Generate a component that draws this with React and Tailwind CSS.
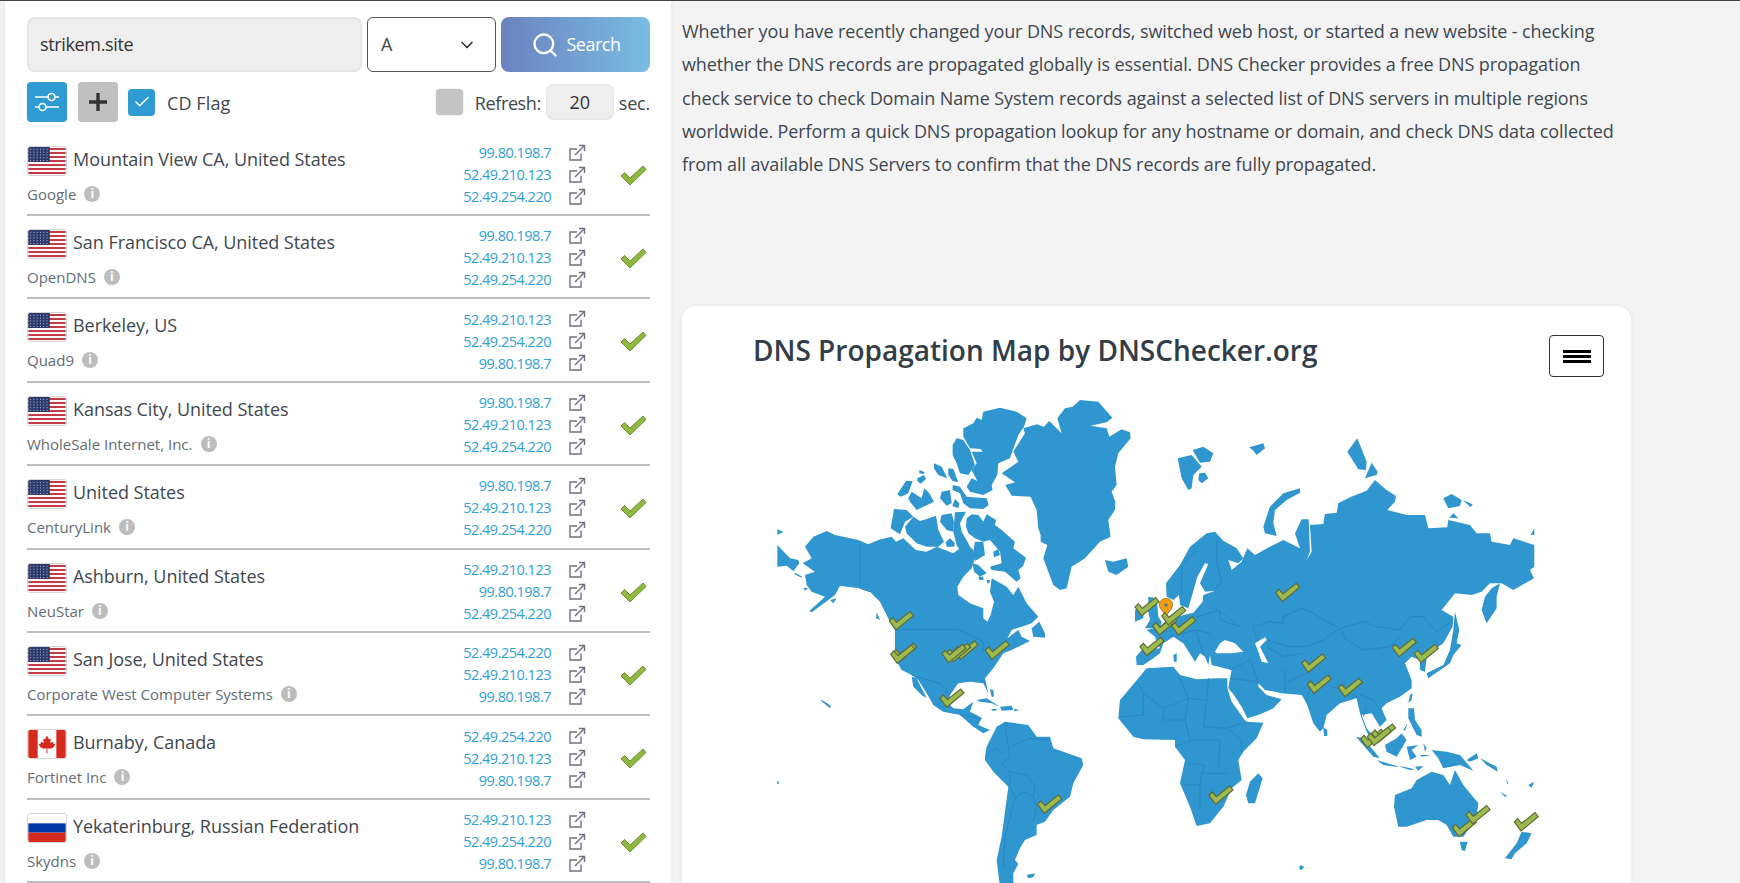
import React from "react";
import { Search, ChevronDown, Check } from "lucide-react";

const A = "99.80.198.7";
const B = "52.49.210.123";
const C = "52.49.254.220";

const servers = [
  { flag: "us", name: "Mountain View CA, United States", org: "Google", ips: [A, B, C] },
  { flag: "us", name: "San Francisco CA, United States", org: "OpenDNS", ips: [A, B, C] },
  { flag: "us", name: "Berkeley, US", org: "Quad9", ips: [B, C, A] },
  { flag: "us", name: "Kansas City, United States", org: "WholeSale Internet, Inc.", ips: [A, B, C] },
  { flag: "us", name: "United States", org: "CenturyLink", ips: [A, B, C] },
  { flag: "us", name: "Ashburn, United States", org: "NeuStar", ips: [B, A, C] },
  { flag: "us", name: "San Jose, United States", org: "Corporate West Computer Systems", ips: [C, B, A] },
  { flag: "ca", name: "Burnaby, Canada", org: "Fortinet Inc", ips: [C, B, A] },
  { flag: "ru", name: "Yekaterinburg, Russian Federation", org: "Skydns", ips: [B, C, A] },
];

const intro = [
  "Whether you have recently changed your DNS records, switched web host, or started a new website - checking",
  "whether the DNS records are propagated globally is essential. DNS Checker provides a free DNS propagation",
  "check service to check Domain Name System records against a selected list of DNS servers in multiple regions",
  "worldwide. Perform a quick DNS propagation lookup for any hostname or domain, and check DNS data collected",
  "from all available DNS Servers to confirm that the DNS records are fully propagated.",
];

// map shapes are in crop pixels (3x), each group below scales them back to the page
const northWest = [
  "M862,70 885,40 908,35 930,15 985,20 1027,68 1010,82 962,92 1010,100 1018,125 1055,103 1080,112 1082,130 1045,175 1035,215 1040,270 1025,290 1036,320 1035,345 1015,375 1022,425 990,440 945,490 905,515 890,580 870,585 850,570 820,490 832,450 812,440 812,420 805,400 800,345 782,305 725,302 706,270 735,262 695,235 745,200 730,170 765,115 760,100 800,88 822,95 838,78 875,115Z",
  "M580,100 610,85 620,68 635,75 640,50 690,38 740,50 770,70 762,95 745,120 720,190 685,205 682,240 665,270 668,285 640,300 600,290 590,275 605,250 622,258 605,225 620,205 605,170 638,170 632,162 600,160 580,125Z",
  "M548,150 560,130 580,135 600,165 615,210 595,240 570,235 560,205 548,180Z",
  "M492,205 515,215 532,250 505,240 492,220Z",
  "M535,220 550,222 565,262 548,258 535,240Z",
  "M448,225 465,232 460,237 448,235Z",
  "M442,250 462,240 468,252 452,266 442,258Z",
  "M408,258 428,258 415,295 392,305 382,298Z",
  "M425,290 455,310 463,280 478,295 492,320 440,345 420,320 415,310Z",
  "M515,290 540,285 545,325 530,332 510,310Z",
  "M548,270 570,275 590,305 650,310 656,330 640,342 600,340 580,325 570,295 548,285Z",
  "M555,312 568,325 565,340 547,333Z",
  "M372,342 410,345 430,365 405,380 390,418 362,400Z",
  "M405,395 430,365 450,378 470,372 498,362 505,405 522,440 505,455 470,455 440,445 420,425 410,415Z",
  "M515,360 545,355 552,380 550,410 530,405 510,380Z",
  "M555,352 588,350 570,385 575,410 595,445 605,470 578,480 560,450 550,410Z",
  "M540,430 555,445 552,455 530,455 527,442Z",
  "M590,370 605,358 625,360 640,380 650,358 678,375 675,390 695,405 735,440 730,460 768,488 760,512 745,525 752,550 740,560 705,530 665,525 660,515 695,505 690,470 660,435 640,440 615,430 595,415 588,395Z",
  "M608,505 625,510 650,535 630,545 612,530Z",
  "M625,545 640,545 640,555 628,555Z",
  "M650,555 660,555 658,565 652,565Z",
  "M615,440 640,440 645,480 615,498 610,470Z",
  "M670,470 685,462 690,480 672,487Z",
  "M105,455 130,425 170,408 195,420 265,435 295,448 325,435 345,430 365,425 378,440 400,430 437,465 470,470 500,455 550,475 590,445 610,465 615,490 605,520 580,545 562,575 565,600 600,625 640,640 640,670 652,680 662,660 672,620 660,590 665,550 710,575 730,600 745,575 770,625 805,665 785,685 755,695 725,705 712,730 745,705 755,725 780,738 745,755 725,765 700,775 670,820 645,850 655,895 640,865 600,860 565,865 540,900 535,925 550,940 580,943 610,920 600,950 620,960 635,970 625,990 660,1005 640,1015 610,995 570,960 520,950 490,930 470,895 445,855 425,840 395,825 375,790 375,705 360,680 330,620 300,590 270,580 230,575 210,572 195,600 175,615 125,652 118,648 165,605 125,590 110,570 105,540 135,530 98,505 125,490Z",
  "M425,845 440,850 470,910 455,900 430,875Z",
  "M785,700 808,680 825,715 825,728 790,725Z",
  "M22,450 60,490 85,495 88,505 70,528 50,512 22,515Z",
  "M22,403 40,410 22,420Z",
  "M75,533 97,545 92,547 73,538Z",
  "M100,578 115,580 105,587Z",
  "M180,615 200,610 190,625Z",
  "M320,652 330,675 318,670Z",
  "M1005,495 1030,500 1070,490 1075,515 1040,540 1015,530Z",
];

const southWest = [
  "M645,350 650,320 680,260 705,245 775,255 800,290 840,290 850,325 935,355 940,375 910,430 900,470 850,510 825,545 800,555 800,585 765,600 750,625 735,660 745,672 730,700 730,740 690,740 680,660 695,590 715,440 670,395 645,360Z",
  "M770,705 795,700 790,712 775,715Z",
  "M150,180 160,182 182,197 180,205 165,192Z",
  "M21,425 27,425 27,431 21,431Z",
  "M620,180 650,175 690,200 665,190 630,185Z",
  "M665,207 680,207 680,212 665,212Z",
  "M690,200 725,197 730,210 695,212Z",
  "M732,207 746,208 746,212 732,212Z",
  "M660,148 670,150 672,170 665,170Z",
];

const northWestBorders = [
  "M270,440 270,580 300,590",
  "M385,703 560,703 590,715 640,740 640,770",
];

const southWestBorders = [
  "M425,105 510,130 540,165",
  "M570,225 610,230 635,235",
  "M705,250 715,320 720,350 695,370 720,395 720,440 735,470",
  "M720,395 770,405 795,440 790,470 760,455 735,475",
  "M645,350 680,325 700,345",
  "M720,320 780,295 840,300",
  "M735,475 705,590 700,680",
  "M790,470 800,500 790,545",
];

const northEast = [
  "M78,710 95,690 150,685 135,650 110,630 150,620 170,600 190,595 200,590 250,578 278,545 280,525 315,512 285,515 270,490 295,432 285,430 262,470 245,530 235,565 210,555 207,525 190,540 170,530 168,490 210,435 240,380 290,340 315,335 340,362 380,385 400,415 385,430 355,420 365,450 395,425 412,385 435,405 480,380 520,360 570,385 555,340 575,298 596,298 600,395 590,420 605,395 600,315 640,312 645,282 680,278 685,250 720,232 770,212 795,180 830,210 858,228 855,245 832,270 890,285 945,285 955,325 1012,322 1015,300 1080,315 1100,340 1140,340 1145,365 1200,375 1210,355 1273,375 1273,440 1260,450 1272,475 1210,510 1175,490 1140,490 1115,515 1085,525 1035,520 995,570 1030,590 1028,620 1000,670 985,680 950,715 945,755 930,750 930,720 905,710 885,730 905,780 905,805 870,830 830,850 815,865 830,900 810,920 785,880 755,885 770,925 795,955 810,960 790,965 770,935 750,880 740,835 690,850 650,885 640,925 630,935 610,910 590,850 575,825 515,820 495,815 465,810 445,790 445,800 470,825 515,838 490,865 445,885 412,895 395,860 372,825 355,805 360,775 365,750 305,735 300,705 295,735 285,710 270,700 255,725 220,670 190,650 160,670 150,700 130,715 100,735 80,735Z",
  "M1170,490 1160,530 1160,565 1130,610 1115,570 1125,530 1145,505Z",
  "M190,705 200,700 200,725 192,725Z",
  "M115,530 140,535 145,590 155,605 150,625 105,625 120,600 115,575Z",
  "M75,570 100,565 100,595 75,605Z",
  "M203,115 245,105 275,140 250,165 245,205 235,210 215,175Z",
  "M248,90 280,80 310,100 300,125 270,128Z",
  "M268,160 285,158 295,175 275,190 265,180Z",
  "M418,82 460,70 465,85 440,105 428,90Z",
  "M570,205 570,218 530,240 495,270 490,310 500,348 465,340 460,320 480,260 520,220Z",
  "M742,55 770,125 768,150 745,148 712,95Z",
  "M785,128 803,155 800,165 765,175Z",
  "M1000,235 1025,222 1055,240 1050,258 1015,265Z",
  "M1058,240 1088,253 1082,262Z",
  "M1018,293 1030,280 1045,295Z",
  "M1262,345 1273,325 1273,345Z",
  "M1035,575 1048,630 1040,670 1055,675 1030,705 1020,730 955,775 950,760 1000,735 1020,690 1030,630Z",
];

const southEast = [
  "M30,180 60,145 85,115 110,85 190,80 210,105 260,118 320,115 352,115 352,145 365,185 408,245 460,248 440,295 400,335 385,360 395,420 365,445 340,500 300,550 260,558 240,500 210,430 225,360 195,320 195,300 100,298 70,290 25,235Z",
  "M900,165 908,160 905,180 895,188Z",
  "M895,205 912,205 915,240 935,270 935,290 920,285 895,235Z",
  "M880,270 893,250 885,272Z",
  "M640,262 652,270 652,288 642,288Z",
  "M738,290 760,295 810,355 790,350Z",
  "M800,360 860,378 868,382 820,375Z",
  "M870,378 915,388 900,390 875,382Z",
  "M915,380 940,378 925,392Z",
  "M825,315 860,295 875,280 890,300 860,350 830,335Z",
  "M890,320 925,315 905,330 920,350 900,360Z",
  "M940,310 950,325 945,335Z",
  "M930,345 965,345 935,350Z",
  "M965,330 1010,335 1050,345 1090,392 1050,375 1000,385 985,355Z",
  "M1070,360 1100,340 1105,355 1080,365Z",
  "M1110,355 1160,380 1163,395 1130,375Z",
  "M1188,418 1196,430 1192,432Z",
  "M1170,455 1192,468 1185,470Z",
  "M1255,435 1273,425 1265,443Z",
  "M855,465 905,445 920,420 965,395 1000,405 1020,435 1035,390 1060,435 1105,490 1100,530 1085,555 1060,590 1030,590 1010,555 985,540 950,540 890,560 865,560 852,500Z",
  "M1050,605 1073,605 1065,633 1055,630Z",
  "M1235,575 1265,580 1250,610 1215,640 1205,658 1185,655 1220,610Z",
  "M570,675 583,680 575,690 568,688Z",
  "M445,400 458,415 435,490 415,490 408,465 420,425Z",
];

const seas = [
  "M315,695 330,670 345,660 375,670 400,695 365,700 320,700Z",
  "M435,670 465,652 470,660 450,680 475,730 455,725 445,695Z",
];

const northEastBorders = [
  "M430,620 480,605 520,610 520,590 575,565 610,580 640,600 690,625 760,605 800,620 870,630 900,590 940,590 980,635 1030,600",
  "M690,625 710,660 760,690 840,680 870,650",
  "M430,620 440,660",
  "M470,660 540,680 590,680 640,660 690,625",
  "M270,375 215,440 215,530",
  "M320,360 320,430 335,480 315,510",
  "M310,560 390,620",
  "M260,590 330,570 330,600 390,620",
  "M180,650 260,630 300,640",
  "M260,640 280,700",
  "M200,625 220,650",
];

const southEastBorders = [
  "M85,130 100,160 160,205 235,175 205,105",
  "M235,175 290,180 295,115",
  "M100,160 100,225 30,230",
  "M160,205 160,240 225,240 235,175",
  "M290,180 280,260 350,265",
  "M225,240 240,300 330,300",
  "M195,320 250,300",
  "M350,265 395,300 395,335",
  "M215,435 270,435 270,500",
  "M270,435 275,400 350,400",
  "M240,370 280,375 280,400",
  "M330,300 325,380",
  "M350,265 410,245",
  "M360,90 420,60",
  "M420,60 445,130",
  "M360,115 440,125",
  "M525,130 590,100",
  "M525,90 525,160",
  "M590,190 600,130",
  "M650,135 700,150 740,170",
  "M750,165 790,180 810,210",
  "M760,230 770,200",
  "M470,20 520,50 580,40",
];

const northWestChecks = [[358, 650], [368, 745], [362, 750], [552, 738], [530, 745], [516, 748], [646, 738]];
const southWestChecks = [[510, 147], [803, 465]];
const northEastChecks = [[75, 533], [128, 590], [155, 560], [185, 590], [90, 652], [497, 490], [847, 655], [913, 673], [575, 702]];
const southEastChecks = [[592, 105], [685, 115], [752, 268], [785, 252], [772, 262], [297, 438], [1027, 535], [1068, 497], [1213, 518]];

function MapCheck({ x, y }) {
  return (
    <polygon
      transform={`translate(${x} ${y})`}
      points="0,28 20,55 72,12 62,0 22,32 10,18"
      fill="#9dbb4d"
      stroke="#5d6a3a"
      strokeWidth="1.2"
      vectorEffect="non-scaling-stroke"
    />
  );
}

function Land({ shapes, borders = [] }) {
  return (
    <>
      {shapes.map((d) => <path key={d} d={d} fill="#2f96cf" />)}
      {borders.map((d) => <path key={d} d={d} fill="none" stroke="#2a86bf" strokeWidth="1" vectorEffect="non-scaling-stroke" />)}
    </>
  );
}

function WorldMap() {
  return (
    <svg width="780" height="503" viewBox="770 380 780 503" className="ml-[88px] mt-[3px] block">
      <g transform="translate(770 395) scale(0.3333)">
        <Land shapes={northWest} borders={northWestBorders} />
      </g>
      <g transform="translate(770 640) scale(0.3333)">
        <Land shapes={southWest} borders={southWestBorders} />
      </g>
      <g transform="translate(1110 420) scale(0.3333)">
        <Land shapes={northEast} borders={northEastBorders} />
        {seas.map((d) => <path key={d} d={d} fill="#fff" />)}
      </g>
      <g transform="translate(1110 640) scale(0.3333)">
        <Land shapes={southEast} borders={southEastBorders} />
      </g>
      <g transform="translate(770 395) scale(0.3333)">
        {northWestChecks.map(([x, y]) => <MapCheck key={`${x}-${y}`} x={x} y={y} />)}
      </g>
      <g transform="translate(770 640) scale(0.3333)">
        {southWestChecks.map(([x, y]) => <MapCheck key={`${x}-${y}`} x={x} y={y} />)}
      </g>
      <g transform="translate(1110 420) scale(0.3333)">
        <path d="M168,588 C155,570 148,562 148,555 C148,544 157,535 168,535 C179,535 188,544 188,555 C188,562 181,570 168,588Z" fill="#f89c0e" stroke="#7a6a3a" strokeWidth="0.8" vectorEffect="non-scaling-stroke" />
        <circle cx="168" cy="555" r="5" fill="#2f7fb0" />
        {northEastChecks.map(([x, y]) => <MapCheck key={`${x}-${y}`} x={x} y={y} />)}
      </g>
      <g transform="translate(1110 640) scale(0.3333)">
        {southEastChecks.map(([x, y]) => <MapCheck key={`${x}-${y}`} x={x} y={y} />)}
      </g>
    </svg>
  );
}

function Flag({ code }) {
  return (
    <svg width="40" height="30" viewBox="0 0 40 30" className="shrink-0 rounded-[3px] border border-[#d5d5d5]">
      {code === "us" && (
        <>
          <rect width="40" height="30" fill="#fff" />
          {[0, 1, 2, 3, 4, 5, 6].map((i) => (
            <rect key={i} y={1 + i * 4.3} width="40" height="2.2" fill="#c23b45" />
          ))}
          <rect width="23" height="16" fill="#2c3a6e" />
          {[2, 5, 8, 11, 14].map((y) =>
            [2, 5.5, 9, 12.5, 16, 19.5].map((x) => (
              <rect key={`${x}-${y}`} x={x} y={y} width="1" height="1" fill="#c9cfe4" />
            ))
          )}
        </>
      )}
      {code === "ca" && (
        <>
          <rect width="40" height="30" fill="#fff" />
          <rect width="10" height="30" fill="#d52b1e" />
          <rect x="30" width="10" height="30" fill="#d52b1e" />
          <path d="M20,6 22,10 24,9 23.5,14 26.5,12.5 27,15 29,15 27,18.5 24,20 20.5,19.5 20.5,25 19.5,25 19.5,19.5 16,20 13,18.5 11,15 13,15 13.5,12.5 16.5,14 16,9 18,10Z" fill="#d52b1e" />
        </>
      )}
      {code === "ru" && (
        <>
          <rect width="40" height="10" fill="#fff" />
          <rect y="10" width="40" height="10" fill="#0039a6" />
          <rect y="20" width="40" height="10" fill="#d52b1e" />
        </>
      )}
    </svg>
  );
}

function InfoDot() {
  return (
    <span className="flex h-[16px] w-[16px] shrink-0 items-center justify-center rounded-full bg-[#bdbdbd] text-[12px] font-bold leading-none text-white">
      i
    </span>
  );
}

function ExternalIcon() {
  return (
    <svg width="18" height="18" viewBox="0 0 18 18" fill="none" stroke="#6b7280" strokeWidth="1.4" className="shrink-0">
      <path d="M13,9.5V16H2V5H9" />
      <path d="M7,11 16,2" />
      <path d="M11,1.5H16.5V7" />
    </svg>
  );
}

function ServerRow({ row }) {
  return (
    <div className="flex h-[83.4px] border-b-2 border-[#bdbdbd] pt-[13px]">
      <div className="min-w-0 flex-1">
        <div className="flex items-center gap-[6px]">
          <Flag code={row.flag} />
          <span className="whitespace-nowrap pb-[4px] text-[18px] leading-[26px] tracking-[-0.05px] text-[#3f4750]">{row.name}</span>
        </div>
        <div className="mt-[7px] flex items-center gap-[8px]">
          <span className="whitespace-nowrap text-[15px] leading-[22px] text-[#646c74]">{row.org}</span>
          <InfoDot />
        </div>
      </div>
      <div className="-mt-[4px] w-[146px]">
        {row.ips.map((ip, i) => (
          <div key={i} className="flex h-[22px] items-center justify-end gap-[17px] pr-[32px]">
            <span className="text-[14.5px] tracking-[-0.5px] text-[#31a0d6]">{ip}</span>
            <ExternalIcon />
          </div>
        ))}
      </div>
      <div className="flex w-[32px] items-start pl-[2px] pt-[19px]">
        <svg width="27" height="21" viewBox="0 0 27 21">
          <path d="M1,11 4.5,7.5 10,13 23,1 26,4.5 10,20Z" fill="#8fb83f" stroke="#6f8f3a" strokeWidth="1" />
        </svg>
      </div>
    </div>
  );
}

export default function App() {
  return (
    <div className="flex h-screen overflow-hidden border-t border-[#444] bg-[#f3f3f3] font-['Open_Sans',sans-serif]">
      <aside className="ml-[5px] w-[666px] shrink-0 bg-white pl-[22px] pr-[21px] pt-[16px] shadow-[0_0_4px_rgba(0,0,0,0.08)]">
        <div className="flex h-[55px] gap-[5px]">
          <div className="flex w-[335px] items-center rounded-[8px] bg-[#eeeeee] pl-[13px] text-[18px] tracking-[-0.35px] text-[#333] shadow-[inset_0_0_3px_rgba(0,0,0,0.12)]">
            strikem.site
          </div>
          <div className="flex w-[129px] items-center justify-between rounded-[6px] border border-[#555] bg-white pl-[13px] pr-[18px] text-[18px] text-[#444]">
            A
            <ChevronDown size={20} strokeWidth={2} className="text-[#333]" />
          </div>
          <div className="flex w-[149px] items-center justify-center gap-[8px] rounded-[8px] bg-gradient-to-r from-[#6b82c0] to-[#79bde1] text-[18px] tracking-[-0.5px] text-white">
            <Search size={28} strokeWidth={2} />
            Search
          </div>
        </div>
        <div className="mt-[10px] flex h-[40px] items-center">
          <div className="flex h-[40px] w-[40px] items-center justify-center rounded-[4px] bg-[#2e9bd3]">
            <svg width="28" height="26" viewBox="0 0 28 26" fill="none" stroke="#fff" strokeWidth="1.6">
              <path d="M2,8H15M22,8H26M2,18H6M13,18H26" />
              <circle cx="18.5" cy="8" r="3.5" />
              <circle cx="9.5" cy="18" r="3.5" />
            </svg>
          </div>
          <div className="ml-[11px] flex h-[40px] w-[40px] items-center justify-center rounded-[4px] bg-[#c0c0c0]">
            <svg width="20" height="20" viewBox="0 0 20 20" stroke="#333" strokeWidth="3.4">
              <path d="M10,1V19M1,10H19" />
            </svg>
          </div>
          <div className="ml-[10px] flex h-[27px] w-[27px] items-center justify-center rounded-[4px] bg-[#2e9bd3]">
            <Check size={18} strokeWidth={2} className="text-white" />
          </div>
          <span className="ml-[12px] pt-[2px] text-[18px] tracking-[0.1px] text-[#3f4750]">CD Flag</span>
          <div className="ml-auto h-[26px] w-[27px] rounded-[4px] bg-[#c4c4c4] shadow-[0_0_2px_rgba(0,0,0,0.2)]" />
          <span className="ml-[12px] pt-[2px] text-[18px] tracking-[-0.4px] text-[#3f4750]">Refresh:</span>
          <div className="ml-[5px] flex h-[36px] w-[68px] items-center justify-center rounded-[8px] bg-[#eeeeee] text-[18px] text-[#333] shadow-[inset_0_0_2px_rgba(0,0,0,0.12)]">
            20
          </div>
          <span className="ml-[5px] pt-[2px] text-[18px] tracking-[-0.2px] text-[#3f4750]">sec.</span>
        </div>
        <div className="mt-[10.7px]">
          {servers.map((row) => (
            <ServerRow key={row.name} row={row} />
          ))}
        </div>
      </aside>
      <main className="ml-[11px] w-[949px] shrink-0 pt-[14px]">
        <div className="h-[166px] text-[18px] leading-[33.3px] tracking-[-0.1px] text-[#3f4750]">
          {intro.map((line) => (
            <div key={line} className="whitespace-nowrap">{line}</div>
          ))}
        </div>
        <section className="mt-[125px] h-[800px] rounded-t-[14px] bg-white pt-[29px] shadow-[0_0_4px_rgba(0,0,0,0.08)]">
          <div className="flex items-start justify-between pl-[71px] pr-[27px]">
            <h2 className="text-[28px] font-semibold leading-[30px] text-[#333d47]">DNS Propagation Map by DNSChecker.org</h2>
            <div className="flex h-[42px] w-[55px] flex-col items-center justify-center gap-[2px] rounded-[4px] border border-[#333]">
              <span className="h-[3px] w-[28px] bg-black" />
              <span className="h-[3px] w-[28px] bg-black" />
              <span className="h-[3px] w-[28px] bg-black" />
            </div>
          </div>
          <WorldMap />
        </section>
      </main>
    </div>
  );
}
